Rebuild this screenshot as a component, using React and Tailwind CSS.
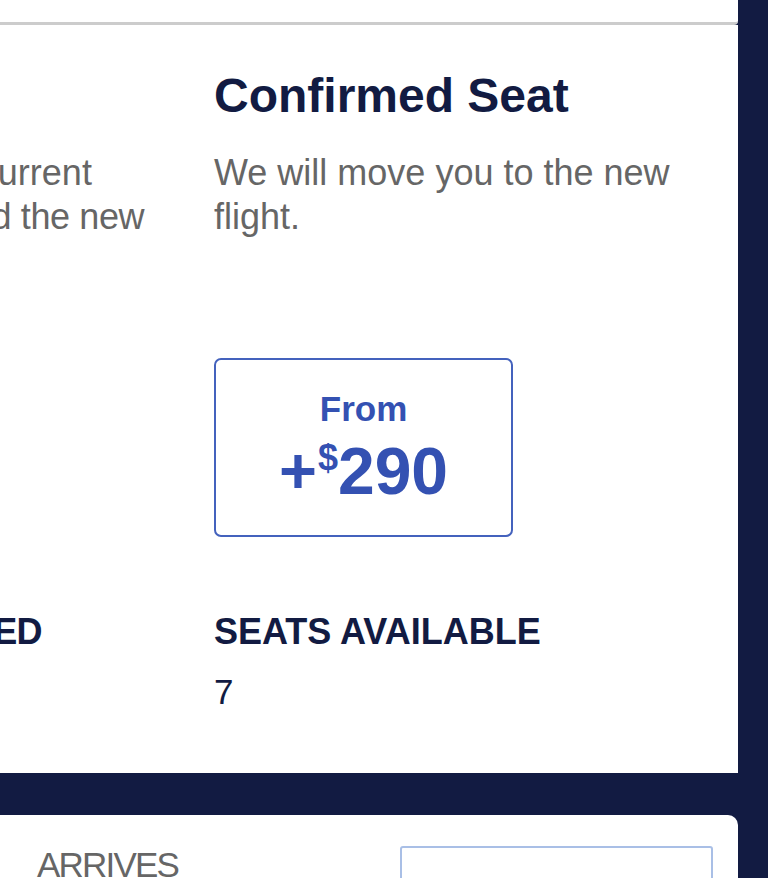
import React from "react";

const font = "font-['Liberation_Sans',Arial,Helvetica,sans-serif]";

function FareColumn({ title, lines, price, label, value, labelClass = "", textClass = "" }) {
  return (
    <div className="w-[500px] shrink-0">
      <h2 className="text-[48px] leading-[56px] font-bold text-[#121b42]">{title}</h2>
      <p className={`mt-[27px] h-[132px] text-[36px] leading-[44px] text-[#666666] ${textClass}`}>
        {lines.map((l, i) => (
          <span key={i} className={`block whitespace-nowrap ${l.cls || ""}`}>
            {l.text}
          </span>
        ))}
      </p>
      <div className="mt-[75px] w-[299px] h-[179px] border-2 border-[#4462bd] rounded-[7px] flex flex-col items-center pt-[29px] text-[#3451b2]">
        <div className="text-[35px] leading-[40px] font-bold">From</div>
        <div className="mt-[10px] flex items-start font-bold leading-[64px]">
          <span className="text-[65px] leading-[64px]">+</span>
          <span className="text-[36px] leading-[36px] mt-[1px] ml-[1px]">$</span>
          <span className="text-[66px] leading-[64px]">{price}</span>
        </div>
      </div>
      <div className={`mt-[75px] text-[36px] leading-[40px] font-bold text-[#121b42] whitespace-nowrap ${labelClass}`}>
        {label}
      </div>
      <div className="mt-[20px] text-[35px] leading-[40px] text-[#121b42]">{value}</div>
    </div>
  );
}

export default function App() {
  return (
    <div className={`${font} w-[768px] h-[878px] overflow-hidden bg-[#121b42] pr-[30px] flex flex-col`}>
      {/* card above, cut off */}
      <div className="h-[25px] shrink-0 bg-white border-b-[3px] border-[#cccccc] rounded-br-[4px]" />

      {/* fare options card */}
      <div className="h-[748px] shrink-0 bg-white pt-[43px] overflow-hidden">
        <div className="flex gap-[48px] -ml-[334px]">
          <FareColumn
            title="Standby"
            textClass="pl-[3px]"
            lines={[
              { text: "You will retain your current" },
              { text: "seat assignments and the new", cls: "tracking-[-0.4px]" },
              { text: "flight." },
            ]}
            price="0"
            label="PASSENGERS LISTED"
            labelClass="tracking-[-0.55px]"
            value="3"
          />
          <FareColumn
            title="Confirmed Seat"
            lines={[{ text: "We will move you to the new" }, { text: "flight." }]}
            price="290"
            label="SEATS AVAILABLE"
            value="7"
          />
        </div>
      </div>

      {/* next card */}
      <div className="mt-[42px] flex-1 bg-white rounded-tr-[10px] flex justify-between pl-[37px] pr-[25px] pt-[28px]">
        <div className="text-[35px] leading-[44px] tracking-[-1.8px] text-[#666666]">ARRIVES</div>
        <div className="mt-[3px] w-[313px] h-[80px] border-2 border-[#a9bfe6] rounded-[3px]" />
      </div>
    </div>
  );
}
